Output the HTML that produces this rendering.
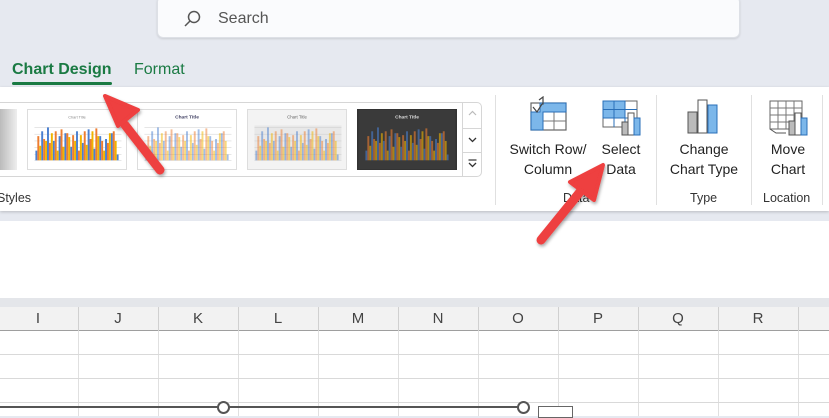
<!DOCTYPE html>
<html><head><meta charset="utf-8"><style>
*{margin:0;padding:0;box-sizing:border-box}
body{width:829px;height:416px;overflow:hidden;background:#e6e9f0;font-family:"Liberation Sans",sans-serif;position:relative}
.abs{position:absolute}
.search{left:157px;top:-4px;width:583px;height:42px;background:#fafbfd;border-radius:6px;border:1px solid #dde0e6;box-shadow:0 1px 2px rgba(0,0,0,.12)}
.search span{position:absolute;left:60px;top:13px;font-size:16px;color:#555}
.tab{top:61px;font-size:16px;color:#1a7a43}
.ribbon{left:0;top:87px;width:829px;height:124px;background:#fff;box-shadow:0 1px 3px rgba(0,0,0,.2)}
.gal{left:-5px;top:102px;width:487px;height:75px;border:1px solid #d6d6d6;border-radius:5px;background:#fff}
.th{top:109px;width:100px;height:61px;border:1px solid #ddd;background:#fff;overflow:hidden}
.lbl{font-size:14px;color:#222;text-align:center;line-height:20px}
.grp{font-size:12.5px;color:#333;top:191px}
.sep{width:1px;background:#e0e0e0;top:95px;height:110px}
.sheet{left:0;top:221px;width:829px;height:77px;background:#fff}
.hdr{left:0;top:307px;width:829px;height:24px;background:#f2f2f2;border-bottom:1px solid #9e9e9e}
.band{left:0;top:298px;width:829px;height:9px;background:#e4e6ea}
.col{top:310px;font-size:15px;color:#444;width:80px;text-align:center;font-family:"Liberation Sans Narrow","Liberation Sans",sans-serif}
.grid{left:0;top:331px;width:829px;height:85px;background:#fff;
background-image:linear-gradient(#d9d9d9 1px,transparent 1px),linear-gradient(90deg,#e0e0e0 1px,transparent 1px);
background-size:829px 24px,80px 85px;background-position:0 23px,78px 0}
</style></head><body>
<svg width="0" height="0" style="position:absolute"><defs>
<g id="bars">
<g fill="#4a7fd0"><rect x="7" y="42" width="2" height="10"/><rect x="13" y="22" width="2" height="30"/><rect x="19" y="18" width="2" height="34"/><rect x="25" y="32" width="2" height="20"/><rect x="31" y="27" width="2" height="25"/><rect x="37" y="24" width="2" height="28"/><rect x="43" y="38" width="2" height="14"/><rect x="49" y="22" width="2" height="30"/><rect x="55" y="34" width="2" height="18"/><rect x="61" y="20" width="2" height="32"/><rect x="67" y="40" width="2" height="12"/><rect x="73" y="27" width="2" height="25"/><rect x="79" y="30" width="2" height="22"/><rect x="85" y="24" width="2" height="28"/><rect x="91" y="46" width="2" height="6"/></g>
<g fill="#ed7d31"><rect x="9" y="27" width="2" height="25"/><rect x="15" y="30" width="2" height="22"/><rect x="21" y="34" width="2" height="18"/><rect x="27" y="22" width="2" height="30"/><rect x="33" y="20" width="2" height="32"/><rect x="39" y="24" width="2" height="28"/><rect x="45" y="26" width="2" height="26"/><rect x="51" y="42" width="2" height="10"/><rect x="57" y="22" width="2" height="30"/><rect x="63" y="30" width="2" height="22"/><rect x="69" y="19" width="2" height="33"/><rect x="75" y="32" width="2" height="20"/><rect x="81" y="34" width="2" height="18"/><rect x="87" y="22" width="2" height="30"/></g>
<g fill="#f0b400"><rect x="11" y="37" width="2" height="15"/><rect x="17" y="32" width="2" height="20"/><rect x="23" y="24" width="2" height="28"/><rect x="29" y="42" width="2" height="10"/><rect x="35" y="38" width="2" height="14"/><rect x="41" y="28" width="2" height="24"/><rect x="47" y="32" width="2" height="20"/><rect x="53" y="26" width="2" height="26"/><rect x="59" y="36" width="2" height="16"/><rect x="65" y="22" width="2" height="30"/><rect x="71" y="27" width="2" height="25"/><rect x="77" y="42" width="2" height="10"/><rect x="83" y="24" width="2" height="28"/><rect x="89" y="32" width="2" height="20"/></g>
</g>
<g id="grid" stroke="#ccc" stroke-width=".5"><path d="M6 18H96M6 25H96M6 32H96M6 39H96M6 46H96M6 52H96"/></g>
</defs></svg>
<div class="abs search"><svg class="abs" style="left:24px;top:12px" width="20" height="20" viewBox="0 0 20 20"><circle cx="12" cy="8" r="5.5" fill="none" stroke="#555" stroke-width="1.5"/><path d="M8 12L3 17" stroke="#555" stroke-width="1.5"/></svg><span>Search</span></div>
<div class="abs tab" style="left:12px;font-weight:bold">Chart Design</div>
<div class="abs" style="left:12px;top:82px;width:100px;height:3px;background:#1a7a43;border-radius:2px"></div>
<div class="abs tab" style="left:134px">Format</div>
<div class="abs ribbon"></div>
<div class="abs gal"></div>
<div class="abs" style="left:0;top:109px;width:17px;height:61px;background:linear-gradient(90deg,#bbb,#eee)"></div>
<svg class="abs th" style="left:27px" viewBox="0 0 100 61"><use href="#grid"/><text x="50" y="9" font-size="4" text-anchor="middle" fill="#888" font-family="Liberation Sans">Chart Title</text><use href="#bars"/></svg>
<svg class="abs th" style="left:137px" viewBox="0 0 100 61"><use href="#grid"/><text x="50" y="9" font-size="5" font-weight="bold" text-anchor="middle" fill="#446" font-family="Liberation Sans">Chart Title</text><g opacity=".5"><use href="#bars"/></g></svg>
<svg class="abs th" style="left:247px;background:#f3f3f3" viewBox="0 0 100 61"><rect x="6" y="16" width="90" height="36" fill="#e8e8e8"/><use href="#grid"/><text x="50" y="9" font-size="4.5" text-anchor="middle" fill="#666" font-family="Liberation Sans">Chart Title</text><g opacity=".5"><use href="#bars"/></g></svg>
<svg class="abs th" style="left:357px;background:#333;border-color:#333" viewBox="0 0 100 61"><rect width="100" height="61" fill="#3a3a3a"/><text x="50" y="9" font-size="5" font-weight="bold" text-anchor="middle" fill="#ddd" font-family="Liberation Sans">Chart Title</text><g opacity=".6"><use href="#bars"/></g></svg>
<div class="abs" style="left:462px;top:102px;width:1px;height:75px;background:#d6d6d6"></div>
<div class="abs" style="left:462px;top:128px;width:20px;height:1px;background:#d6d6d6"></div>
<div class="abs" style="left:462px;top:152px;width:20px;height:1px;background:#d6d6d6"></div>
<svg class="abs" style="left:463px;top:100px" width="19" height="77" viewBox="0 0 19 77">
<path d="M6 15L9.5 11.5L13 15" fill="none" stroke="#bbb" stroke-width="1.2"/>
<path d="M6 38L9.5 41.5L13 38" fill="none" stroke="#333" stroke-width="1.3"/>
<path d="M5.5 60H13.5" stroke="#333" stroke-width="1.2"/>
<path d="M6 63L9.5 66.5L13 63" fill="none" stroke="#333" stroke-width="1.3"/>
</svg>
<div class="abs grp" style="left:-3px">Styles</div>
<div class="abs sep" style="left:495px"></div>
<div class="abs sep" style="left:656px"></div>
<div class="abs sep" style="left:751px"></div>
<div class="abs sep" style="left:822px"></div>
<svg class="abs" style="left:525px;top:96px" width="45" height="36" viewBox="0 0 45 36">
<rect x="6" y="7" width="35" height="27" fill="#fff" stroke="#666" stroke-width="1.2"/>
<path d="M6 16H41M6 25H41M18 7V34M29 7V34" stroke="#777"/>
<path d="M15 7H41V16H18V34H6V16H15Z" fill="#7cb7ea" stroke="#2a6fb8"/>
<path d="M8 11L12 16L17 8M14 4L18 1V8L17 8" fill="none" stroke="#444" stroke-width="1.2"/>
</svg>
<svg class="abs" style="left:602px;top:100px" width="40" height="36" viewBox="0 0 40 36">
<rect x="1" y="1" width="34" height="26" fill="#fff" stroke="#666"/>
<rect x="1" y="1" width="22" height="17" fill="#7cb7ea" stroke="#2a6fb8"/>
<path d="M1 9.5H35M1 18H35M12 1V27M23 1V27" stroke="#2a6fb8"/>
<rect x="20" y="22" width="6" height="13" fill="#bbb" stroke="#555"/><rect x="26" y="13" width="6" height="22" fill="#fff" stroke="#555"/><rect x="32" y="18" width="6" height="17" fill="#7cb7ea" stroke="#2a6fb8"/>
</svg>
<svg class="abs" style="left:686px;top:97px" width="36" height="38" viewBox="0 0 36 38">
<rect x="2" y="15" width="9" height="21" fill="#bbb" stroke="#555"/><rect x="12" y="3" width="9" height="33" fill="#fff" stroke="#555"/><rect x="22" y="8" width="9" height="28" fill="#7cb7ea" stroke="#2a6fb8"/>
</svg>
<svg class="abs" style="left:768px;top:99px" width="42" height="38" viewBox="0 0 42 38">
<rect x="2" y="2" width="32" height="28" fill="#fff" stroke="#666"/>
<path d="M2 9H34M2 16H34M2 23H34M10 2V30M18 2V30M26 2V30" stroke="#777"/>
<path d="M2 30L8 34H18" fill="none" stroke="#555"/>
<rect x="21" y="22" width="6" height="14" fill="#bbb" stroke="#555"/><rect x="27" y="14" width="6" height="22" fill="#fff" stroke="#555"/><rect x="33" y="19" width="6" height="17" fill="#7cb7ea" stroke="#2a6fb8"/>
</svg>
<div class="abs lbl" style="left:503px;top:139px;width:90px">Switch Row/<br>Column</div>
<div class="abs lbl" style="left:596px;top:139px;width:50px">Select<br>Data</div>
<div class="abs lbl" style="left:660px;top:139px;width:88px">Change<br>Chart Type</div>
<div class="abs lbl" style="left:760px;top:139px;width:56px">Move<br>Chart</div>
<div class="abs grp" style="left:563px">Data</div>
<div class="abs grp" style="left:690px">Type</div>
<div class="abs grp" style="left:763px">Location</div>
<div class="abs sheet"></div>
<div class="abs band"></div>
<div class="abs hdr"></div>
<div class="abs col" style="left:-2px">I</div><div class="abs col" style="left:78px">J</div><div class="abs col" style="left:158px">K</div><div class="abs col" style="left:238px">L</div><div class="abs col" style="left:318px">M</div><div class="abs col" style="left:398px">N</div><div class="abs col" style="left:478px">O</div><div class="abs col" style="left:558px">P</div><div class="abs col" style="left:638px">Q</div><div class="abs col" style="left:718px">R</div>
<div class="abs" style="left:78px;top:307px;width:751px;height:24px;background-image:linear-gradient(90deg,#d0d0d0 1px,transparent 1px);background-size:80px 24px"></div>
<div class="abs grid"></div>
<div class="abs" style="left:0;top:406px;width:524px;height:2px;background:#555"></div>
<div class="abs" style="left:217px;top:401px;width:13px;height:13px;border:2px solid #555;border-radius:50%;background:#fff"></div>
<div class="abs" style="left:517px;top:401px;width:13px;height:13px;border:2px solid #555;border-radius:50%;background:#fff"></div>
<div class="abs" style="left:538px;top:406px;width:35px;height:12px;border:1px solid #666;background:#fff"></div>
<svg class="abs" style="left:0;top:0" width="829" height="416" viewBox="0 0 829 416">
<defs><filter id="s"><feDropShadow dx="1" dy="2" stdDeviation="1.5" flood-opacity=".35"/></filter></defs>
<g filter="url(#s)" fill="#ee3f3f" stroke="#ee3f3f" stroke-linejoin="round" stroke-linecap="round">
<path d="M160 170L125 125" stroke-width="9" fill="none"/>
<path d="M105 96L138 110L118 126Z" stroke-width="4"/>
<path d="M541 240L580 192" stroke-width="9" fill="none"/>
<path d="M603 165L594 200L570 182Z" stroke-width="4"/>
</g></svg>
</body></html>
